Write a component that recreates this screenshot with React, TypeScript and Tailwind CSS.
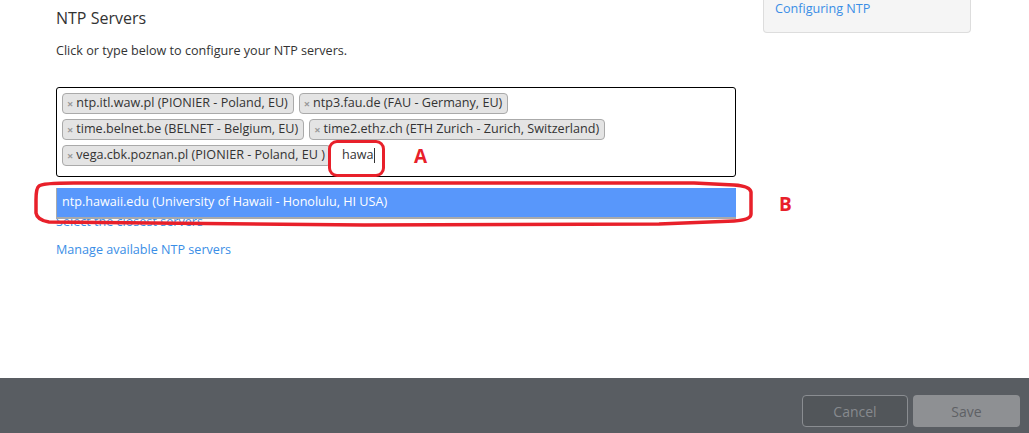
import React from 'react';

const selected = [
  ['ntp.itl.waw.pl (PIONIER - Poland, EU)', 'ntp3.fau.de (FAU - Germany, EU)'],
  ['time.belnet.be (BELNET - Belgium, EU)', 'time2.ethz.ch (ETH Zurich - Zurich, Switzerland)'],
];

const Tag: React.FC<{ label: string }> = ({ label }) => (
  <span className="flex h-[21px] items-center rounded-[4px] border border-[#aaaaaa] bg-[#e4e4e4] pl-[4px] pr-[5px] text-[12.6px] leading-none text-[#333333]">
    <span className="mr-[3px] text-[11px] font-bold text-[#999999]">×</span>
    {label}
  </span>
);

const App: React.FC = () => {
  return (
    <div className="flex h-[433px] w-full flex-col overflow-hidden bg-white font-['Open_Sans',sans-serif] text-[#333333]">
      {/* Content */}
      <div className="flex flex-1">
        <div className="relative ml-[56px] w-[680px]">
          <h2 className="mt-[5px] text-[16px] leading-[26px] text-[#333333]">NTP Servers</h2>
          <p className="mt-[10px] text-[12.6px] leading-[20px] text-[#333333]">
            Click or type below to configure your NTP servers.
          </p>

          {/* Tag input */}
          <div className="mt-[26px] h-[90px] rounded-[3px] border border-black px-[5px] pt-[5px]">
            <div className="flex flex-col gap-[5px]">
              {selected.map((row, i) => (
                <div key={i} className="flex gap-[5px]">
                  {row.map((t) => (
                    <Tag key={t} label={t} />
                  ))}
                </div>
              ))}
              <div className="flex items-center gap-[5px]">
                <Tag label="vega.cbk.poznan.pl (PIONIER - Poland, EU )" />
                <span className="ml-[6px] flex items-center text-[12.6px] leading-none text-[#333333]">
                  hawa
                  <span className="ml-[1px] inline-block h-[15px] w-px bg-[#333333]" />
                </span>
              </div>
            </div>
          </div>

          {/* Links */}
          <div className="mt-[35px] flex flex-col gap-[9px] text-[12.6px] leading-[19px] text-[#3a8ee6]">
            <a>Select the closest servers</a>
            <a>Manage available NTP servers</a>
          </div>

          {/* Dropdown result */}
          <div className="absolute left-0 top-[188px] flex h-[31px] w-[680px] items-center border-b-2 border-l border-[#aaaaaa] bg-[#5897fb] pl-[5px] text-[12.6px] text-white">
            ntp.hawaii.edu (University of Hawaii - Honolulu, HI USA)
          </div>

          {/* Annotation A */}
          <div className="absolute left-[272px] top-[140px] h-[37px] w-[57px] rounded-[9px] border-[3px] border-[#e8202a]" />
          <span className="absolute left-[358px] top-[142px] text-[19px] font-bold text-[#e8202a]">A</span>

          {/* Annotation B */}
          <svg className="absolute left-[-22px] top-[180px]" width="730" height="50" viewBox="0 0 730 50" fill="none">
            <path
              d="M260 3 L40 3 Q8 3 5 6 Q2 8 2 20 L2 33 Q3 40 15 42 L330 45 L625 44 L700 41 Q717 40 717 34 L717 12 Q716 6 700 5 L660 3 L450 3 Z"
              stroke="#e8202a"
              strokeWidth="3.5"
              strokeLinejoin="round"
            />
          </svg>
          <span className="absolute left-[723px] top-[190px] text-[19px] font-bold text-[#e8202a]">B</span>
        </div>

        {/* Sidebar */}
        <div className="ml-[27px] w-[208px]">
          <div className="h-[33px] rounded-b-[4px] border border-t-0 border-[#dddddd] bg-[#f5f5f5] px-[11px] pt-px text-[12.6px] leading-[15px] text-[#3a8ee6]">
            Configuring NTP
          </div>
        </div>
      </div>

      {/* Footer */}
      <div className="flex h-[55px] items-start justify-end gap-[5px] bg-[#595d62] pr-[9px] pt-[17px]">
        <button className="h-[32px] w-[106px] rounded-[4px] border border-[#8a8d91] bg-[#52565a] text-[14px] text-[#878a8e]">
          Cancel
        </button>
        <button className="h-[32px] w-[107px] rounded-[4px] bg-[#8e9093] text-[14px] text-[#5e6165]">
          Save
        </button>
      </div>
    </div>
  );
};

export default App;
